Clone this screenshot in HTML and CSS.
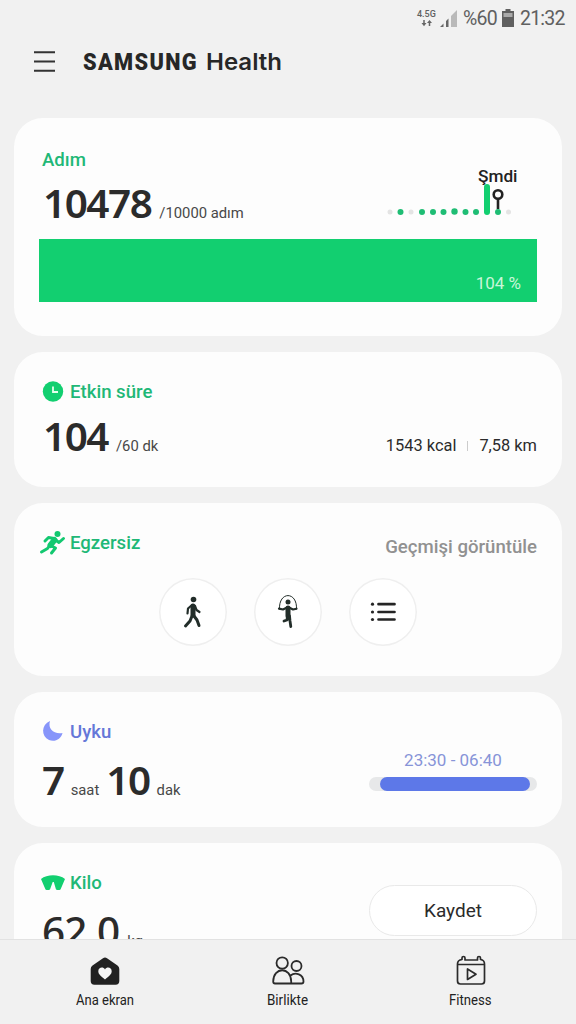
FILE: index.html
```html
<!DOCTYPE html>
<html lang="tr">
<head>
<meta charset="utf-8">
<title>Samsung Health</title>
<link rel="stylesheet" href="styles.css">
</head>
<body>
<div class="screen">
  <div class="status">
    <div class="network"><span>4.5G</span>
      <svg width="12" height="7" viewBox="0 0 12 7"><path d="M3 0v4M8.500 6V2" fill="none" stroke="#666" stroke-width="1.500"/><path d="M.5 3h5L3 6.200zM6 3h5L8.500 0z" fill="#666"/></svg>
    </div>
    <svg class="signal" width="17" height="17" viewBox="0 0 17 17"><path d="M11 6l6-6v17h-6z" fill="#b9b9b9"/><path d="M0 17l3.500-3.500V17zM6 11l2.500-2.500V17H6z" fill="#666"/></svg>
    <span class="percent">%60</span>
    <svg class="battery" width="12" height="18" viewBox="0 0 12 18"><path d="M3.500 0h5v2H12v16H0V2h3.500z" fill="#606060"/><path d="M1.500 4h9v4h-9z" fill="#aaa"/></svg>
    <span class="clock">21:32</span>
  </div>
  <header class="header">
    <svg class="menu" width="21" height="21" viewBox="0 0 21 21"><path d="M0 1.200h21M0 10.500h21M0 19.800h21" stroke="#333" stroke-width="2"/></svg>
    <svg class="brand" width="202" height="30" viewBox="0 0 202 30">
      <text class="brand-main" x="0" y="22" textLength="115" lengthAdjust="spacingAndGlyphs">SAMSUNG</text>
      <text class="brand-sub" x="123" y="22" textLength="76" lengthAdjust="spacingAndGlyphs">Health</text>
    </svg>
  </header>
  <main class="cards">
    <section class="card steps">
      <h2 class="title">Adım</h2>
      <div class="value"><b>10478</b><span>/10000 adım</span></div>
      <svg class="trend" width="134" height="54" viewBox="386 164 134 54">
        <g fill="#e4e4e4"><circle cx="390" cy="212" r="2.500"/><circle cx="411" cy="212" r="2.500"/><circle cx="508.500" cy="212" r="2.500"/></g>
        <g fill="#1fbd74"><circle cx="400.500" cy="212" r="3"/><circle cx="422" cy="212" r="3"/><circle cx="433" cy="212" r="3"/><circle cx="443.500" cy="212" r="3"/><circle cx="454.500" cy="211.500" r="3.200"/><circle cx="465.500" cy="212" r="3"/><circle cx="476" cy="212" r="3"/><circle cx="498" cy="212" r="3"/></g>
        <rect x="484" y="184" width="6" height="31" rx="3" fill="#12cf70"/>
        <circle cx="498" cy="194.500" r="4.300" fill="none" stroke="#222" stroke-width="2.600"/><path d="M498 199v10" stroke="#222" stroke-width="2.600"/>
        <text class="trend-label" x="478" y="182" textLength="39.500" lengthAdjust="spacingAndGlyphs">Şmdi</text>
      </svg>
      <div class="progress">104 %</div>
    </section>
    <section class="card active">
      <h2 class="title"><svg width="22" height="22" viewBox="0 0 22 22"><circle cx="11" cy="10.500" r="10.200" fill="#12cf70"/><path d="M11 5.500V11h5" fill="none" stroke="#e5ffed" stroke-width="1.800"/></svg>Etkin süre</h2>
      <div class="value"><b>104</b><span>/60 dk</span></div>
      <div class="facts"><span>1543 kcal</span><i></i><span>7,58 km</span></div>
    </section>
    <section class="card exercise">
      <h2 class="title"><svg class="runner" width="24" height="24" viewBox="0 0 24 24"><circle cx="16.500" cy="3" r="3" fill="#12c870"/><path d="M13.500 9l-4 5" stroke="#12c870" stroke-width="6" stroke-linecap="round"/><path d="M13 7.500L7.500 6.500 4 10M14.500 9l3.500 2.500 4.500-4M9 14l-2.500 3.500-6 3.500M10.500 15l4 2-4 5" fill="none" stroke="#12c870" stroke-width="3" stroke-linecap="round" stroke-linejoin="round"/></svg>Egzersiz</h2>
      <span class="history">Geçmişi görüntüle</span>
      <div class="choices">
        <div class="choice"><svg width="68" height="68" viewBox="0 0 68 68"><g fill="none" stroke="#222d29" stroke-linecap="round" stroke-linejoin="round"><circle cx="34.500" cy="21.500" r="2.800" fill="#222d29" stroke="none"/><path d="M34 28v9" stroke-width="5"/><path d="M33 27l-4 3.500-.5 5M36 28l1.500 4 3 2" stroke-width="2.200"/><path d="M33 38l-2 5-4.500 5M35 38l3 4 2 5.500" stroke-width="3"/></g></svg></div>
        <div class="choice"><svg width="68" height="68" viewBox="0 0 68 68"><g fill="none" stroke="#222d29" stroke-linecap="round" stroke-linejoin="round"><circle cx="34" cy="24" r="2.500" fill="#222d29" stroke="none"/><path d="M25.500 31c-1-18 18-18 17 0" stroke-width="1"/><path d="M34 30v8" stroke-width="5"/><path d="M33 29.500l-4 2-4-.8M35 29.500l4 2 3.500-.8" stroke-width="2.200"/><path d="M33.500 38l-.5 4-3 1M35.500 38l.5 5 .8 5.500" stroke-width="2.800"/></g></svg></div>
        <div class="choice"><svg width="68" height="68" viewBox="0 0 68 68"><path d="M29.500 26.200H45.500M29.500 34H45.500M29.500 41.500H45.500" stroke="#252525" stroke-width="2.700" stroke-linecap="round"/><g fill="#252525"><circle cx="23.500" cy="26.200" r="1.600"/><circle cx="23.500" cy="34" r="1.600"/><circle cx="23.500" cy="41.500" r="1.600"/></g></svg></div>
      </div>
    </section>
    <section class="card sleep">
      <h2 class="title"><svg width="22" height="22" viewBox="0 0 22 22"><path d="M8 0C-1 4-1 15 7 19c6 2.500 12-1 13.500-7C12 13.500 5.500 8 8 0z" fill="#8795fa"/></svg>Uyku</h2>
      <div class="value"><b>7</b><span>saat</span><b class="minutes">10</b><span>dak</span></div>
      <div class="night"><span>23:30 - 06:40</span><div class="track"><div class="fill"></div></div></div>
    </section>
    <section class="card weight">
      <h2 class="title"><svg class="scale" width="26" height="18" viewBox="0 0 26 18"><path d="M1 5C7 0 19 0 25 5L20.500 15.500q-2 1.200-4.500 0L13.800 8h-1.100L10 15.500q-2.500 1.200-4.500 0z" fill="#12cf70"/></svg>Kilo</h2>
      <div class="value"><b>62,0</b><span>kg</span></div>
      <button class="save">Kaydet</button>
    </section>
  </main>
  <nav class="tabs">
    <div class="tab">
      <svg width="32" height="32" viewBox="0 0 32 32"><path d="M16 2.500q1 0 2 .7l10.500 7.300q1.800 1.300 1.800 3.500V26q0 3.700-3.700 3.700H5.400Q1.700 29.700 1.700 26V14q0-2.200 1.800-3.500L14 3.200q1-.7 2-.7z" fill="#212121"/><path d="M16 24.500c-4-3-6.700-5.200-6.700-8.200 0-4 5-5 6.700-1.700 1.700-3.300 6.700-2.300 6.700 1.700 0 3-2.700 5.200-6.700 8.200z" fill="#f5f5f5"/></svg>
      <svg width="80" height="20" viewBox="0 0 80 20"><text class="tab-label" x="11" y="15" textLength="58" lengthAdjust="spacingAndGlyphs">Ana ekran</text></svg>
    </div>
    <div class="tab">
      <svg width="34" height="32" viewBox="0 0 34 32"><g fill="none" stroke="#2b2b2b" stroke-width="1.800" stroke-linejoin="round"><circle cx="11.200" cy="8" r="5.700"/><circle cx="25.500" cy="11" r="5"/><path d="M4 28.500q-1.800 0-1.800-2c0-15 18-15 18 0v2zM19.500 20.500c5-4 13-1 13 6q0 2-2 2H20"/></g></svg>
      <svg width="80" height="20" viewBox="0 0 80 20"><text class="tab-label" x="19" y="15" textLength="41" lengthAdjust="spacingAndGlyphs">Birlikte</text></svg>
    </div>
    <div class="tab">
      <svg width="32" height="32" viewBox="0 0 32 32"><g fill="none" stroke="#2b2b2b" stroke-width="1.700" stroke-linejoin="round"><path d="M2.500 9V26q0 3 3 3h21q3 0 3-3V9q0-4-4-4.500V3q0-1.500-1.500-1.500T22.500 3v2H10V3q0-1.500-1.500-1.500T7 3v1.500Q2.500 5 2.500 9zM3 9.500h26"/><path d="M12.500 14v10.500L21 19.200z"/></g></svg>
      <svg width="80" height="20" viewBox="0 0 80 20"><text class="tab-label" x="18" y="15" textLength="42.500" lengthAdjust="spacingAndGlyphs">Fitness</text></svg>
    </div>
  </nav>
</div>
</body>
</html>
```

FILE: styles.css
```css
* { box-sizing: border-box; }
body { margin: 0; font-family: Roboto, sans-serif; color: #2b2b2b; background: #f1f1f1; }
svg { display: block; flex: none; overflow: visible; }
.screen { width: 576px; height: 1024px; display: flex; flex-direction: column; overflow: hidden; }
.status { height: 36px; flex: none; display: flex; justify-content: flex-end; align-items: center; padding-right: 11px; color: #606060; font-size: 19.500px; line-height: 36px; }
.network { width: 20px; margin-right: 3px; font-size: 9px; font-weight: 500; line-height: 11px; }
.network svg { margin-left: 4px; }
.signal { margin-right: 6px; }
.percent { width: 33px; margin-right: 6px; padding-top: 1px; letter-spacing: -.7px; }
.battery { margin-right: 6px; }
.clock { width: 45px; padding-top: 1px; letter-spacing: -.8px; }
.header { height: 82px; flex: none; display: flex; align-items: flex-start; padding: 10px 34px; }
.menu { margin: 5px 28px 0 0; }
.brand { margin-top: 2px; }
.brand text { fill: #272727; }
.brand-main { font: 900 24px Roboto, sans-serif; letter-spacing: 1.500px; }
.brand-sub { font: 600 22.500px Inter, sans-serif; }
.cards { flex: 1; min-height: 0; display: flex; flex-direction: column; gap: 16px; padding: 0 14px; overflow: hidden; }
.card { flex: none; background: #fdfdfd; border-radius: 29px; padding: 0 25px 0 28px; display: grid; grid-template-columns: 1fr auto; align-content: start; }
.steps { height: 218px; padding-top: 30px; grid-template-rows: 24px 67px 63px; }
.active { height: 135px; padding-top: 28px; grid-template-rows: 24px 60px; }
.exercise { height: 173px; padding-top: 28px; grid-template-rows: 48px 68px; }
.sleep { height: 135px; padding-top: 28px; grid-template-rows: 24px 65px; }
.weight { height: 173px; padding-top: 28px; grid-template-rows: 24px 70px; }
.title { grid-column: 1; grid-row: 1; margin: 0; display: flex; align-items: center; gap: 6px; height: 24px; font-size: 18.600px; font-weight: 500; line-height: 24px; color: #1fb877; }
.runner { margin: 0 -1px 0 -1px; }
.scale { margin: 0 -2px 0 -2px; }
.sleep .title { color: #6577d8; }
.value { grid-column: 1; grid-row: 2; height: 48px; display: flex; align-items: baseline; margin-top: 12px; line-height: 48px; font-size: 14.800px; color: #484848; white-space: nowrap; }
.value b { font: 600 40.500px/48px "Noto Sans", sans-serif; letter-spacing: -1.500px; color: #2b2b2b; margin-right: 8px; }
.value .minutes { margin-left: 7px; margin-right: 7px; }
.steps .value { margin-top: 7px; }
.active .value { margin-top: 8px; }
.sleep .value b:first-child { margin-right: 7px; }
.weight .value b { letter-spacing: -.8px; font-weight: 500; }
.steps .value, .active .value { padding-left: 1px; }
.trend { grid-column: 2; grid-row: 1 / 3; margin: 16px 17px 0 0; }
.trend-label { font: 500 17px Roboto, sans-serif; fill: #222; }
.progress { grid-column: 1 / 3; margin-left: -3px; height: 63px; background: #12cf70; color: #c9f6d9; font-size: 17px; text-align: right; line-height: 88px; padding-right: 16px; }
.facts { grid-column: 2; grid-row: 2; display: flex; align-items: center; gap: 11px; height: 20px; margin-top: 32px; font-size: 16.400px; align-self: start; line-height: 20px; }
.facts i { width: 1px; height: 10px; background: #ccc; }
.history { font-size: 18.600px; font-weight: 500; line-height: 24px; color: #919191; margin-top: 4px; }
.choices { grid-column: 1 / 3; display: flex; justify-content: center; gap: 27px; margin: -1px 3px 0 0; padding-right: 1px; }
.choice { width: 68px; height: 68px; border-radius: 50%; background: #fff; box-shadow: inset 0 0 0 1.500px #efefef; }
.night { grid-column: 2; grid-row: 1 / 3; width: 168px; padding-top: 28px; text-align: center; font-size: 17px; line-height: 24px; color: #8794d8; }
.track { height: 14px; margin-top: 5px; border-radius: 7px; background: #e7e8e9; padding: 0 7px 0 11px; }
.fill { height: 14px; border-radius: 7px; background: #5d78e8; }
.save { grid-column: 2; grid-row: 1 / 3; align-self: start; width: 168px; height: 51px; margin-top: 14px; border: 1.500px solid #e9e9e9; border-radius: 26px; background: #fff; color: #2b2b2b; font: 19px Roboto, sans-serif; }
.tabs { height: 85px; flex: none; display: flex; justify-content: space-between; padding: 15px 65px 0; border-top: 1px solid #e2e2e2; background: #f1f1f1; }
.tab { width: 80px; display: flex; flex-direction: column; align-items: center; gap: 3px; }
.tab-label { font: 400 15px Roboto, sans-serif; fill: #222; }
```
